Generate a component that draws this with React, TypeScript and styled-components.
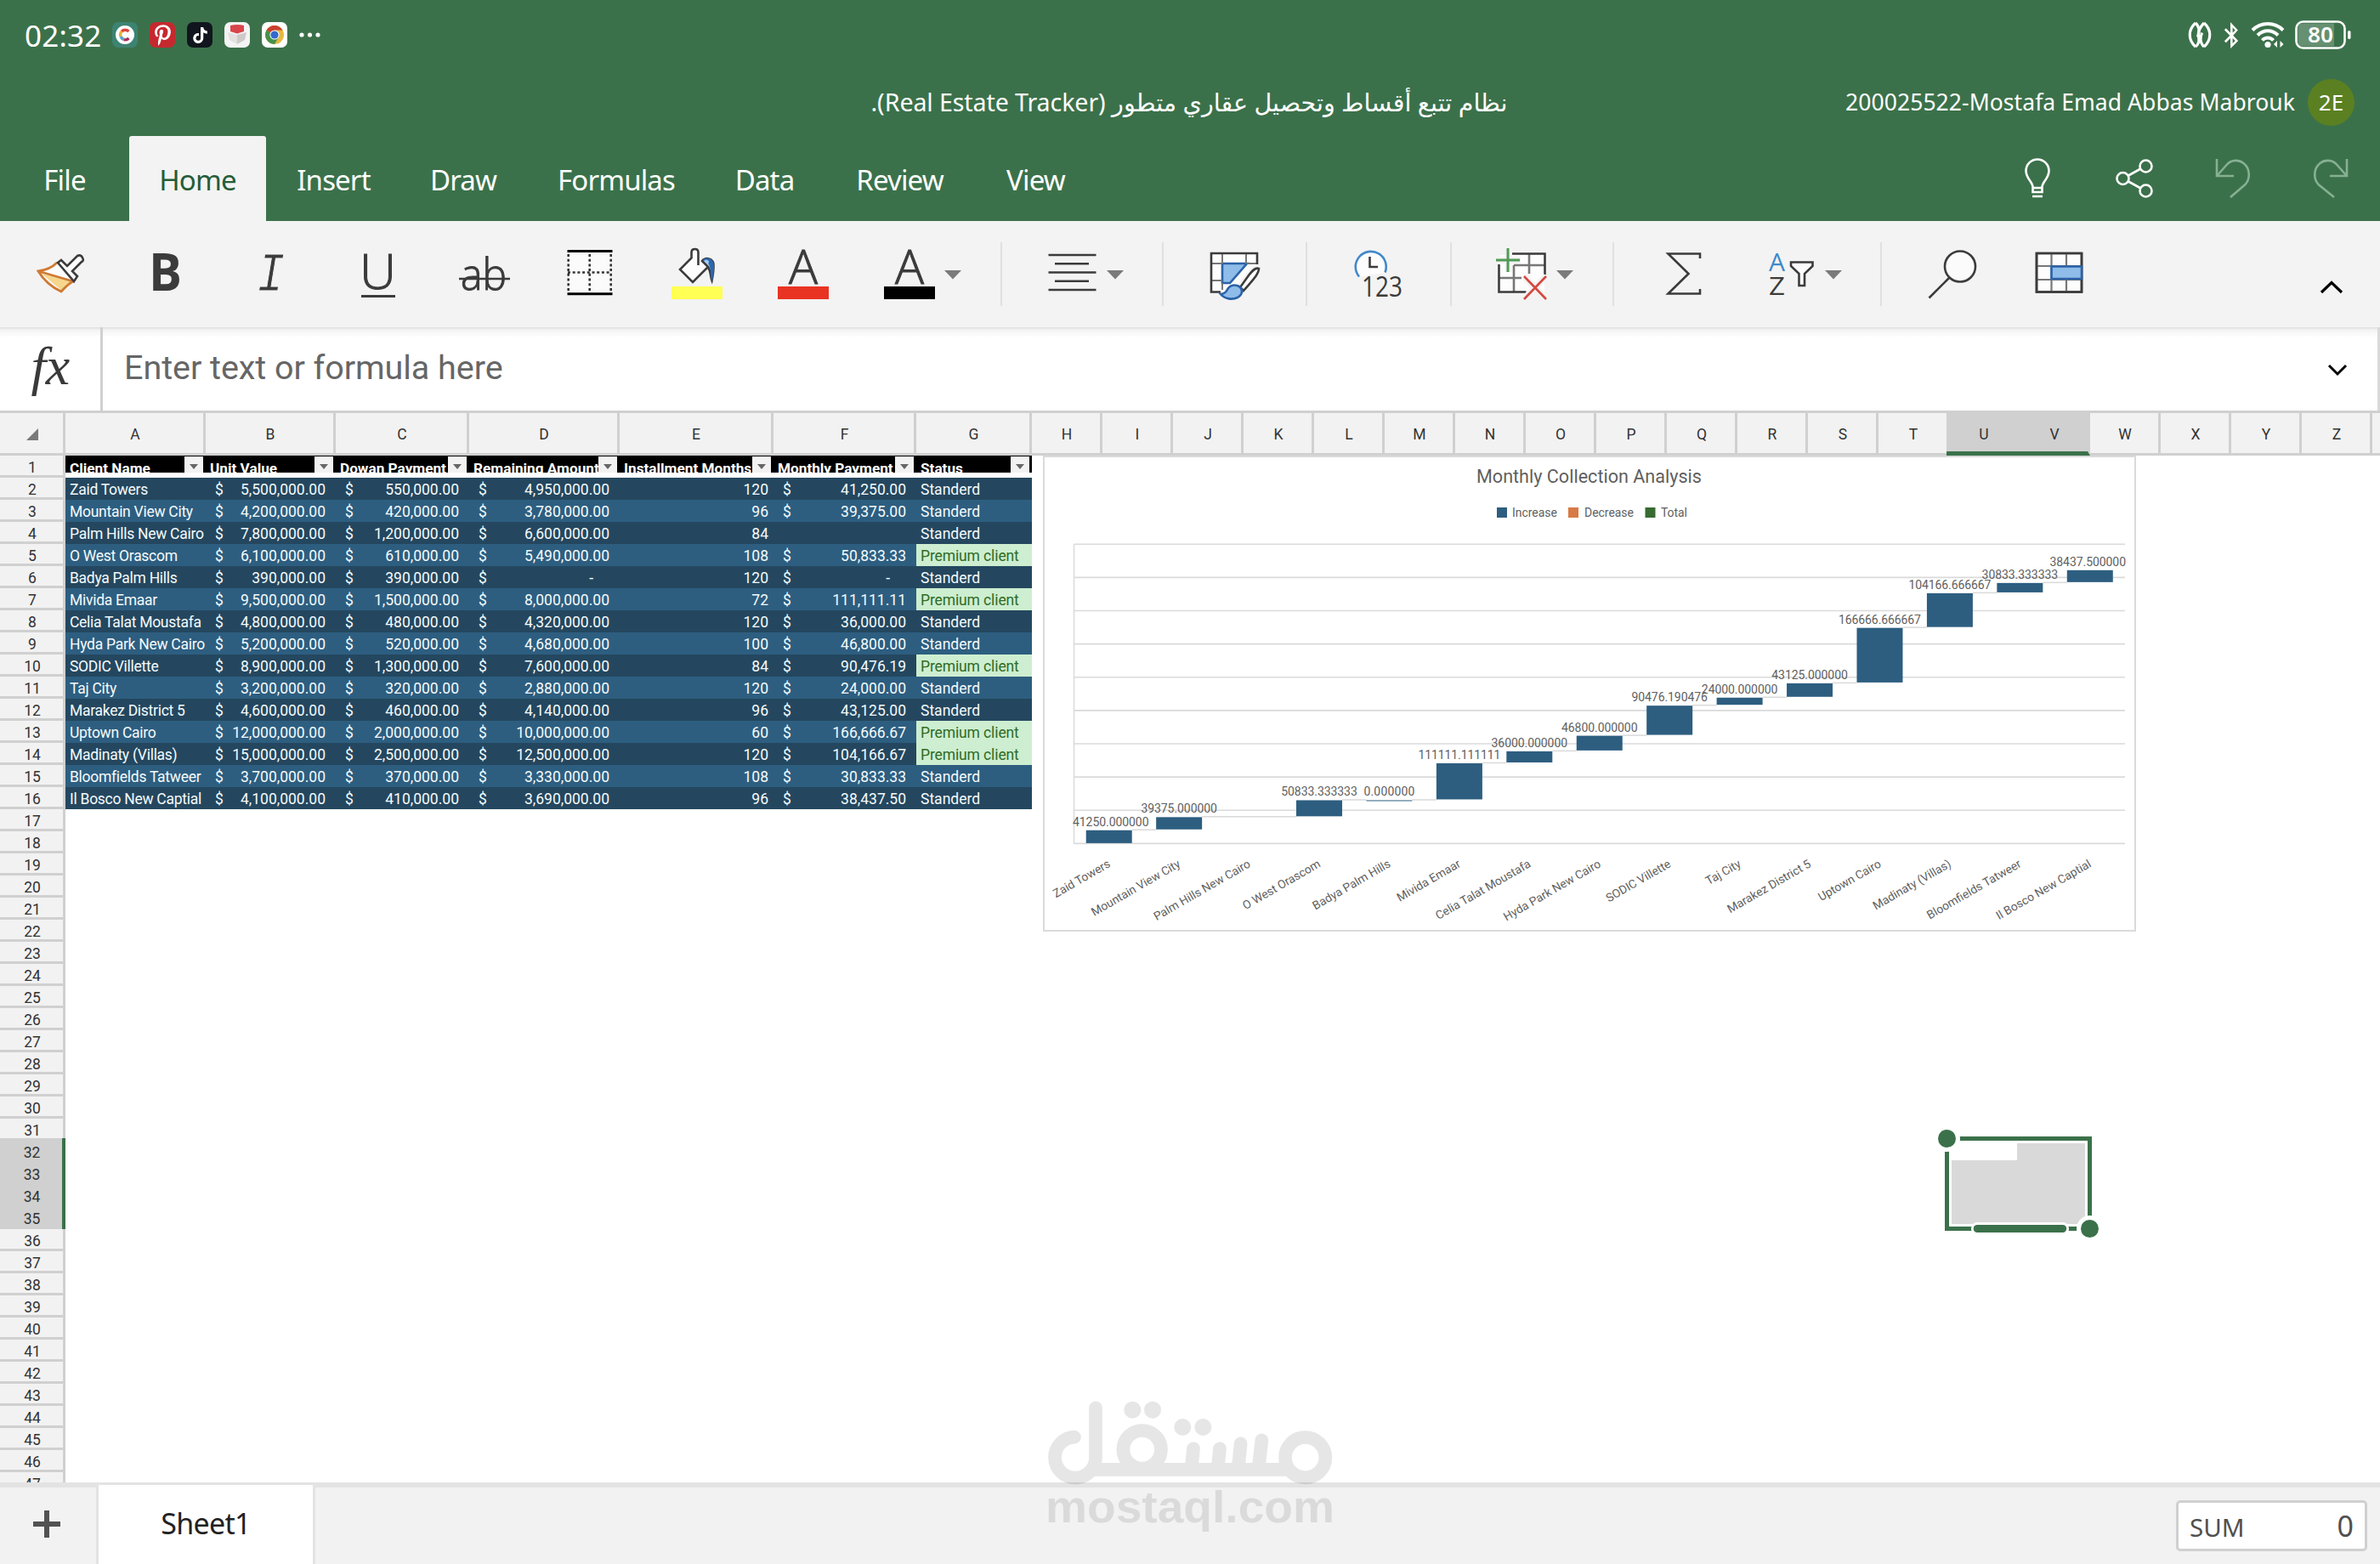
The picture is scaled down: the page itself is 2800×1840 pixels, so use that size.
import * as React from "react";
import styled, { createGlobalStyle, css } from "styled-components";
import { FaBluetoothB, FaPinterestP, FaTiktok } from "react-icons/fa";

const GREEN = "#3b714a";
const LINE = "#d0d0d0";
const UI_FONT = `"Noto Sans", "DejaVu Sans", sans-serif`;
const CELL_FONT = `Roboto, "Liberation Sans", sans-serif`;

const GlobalStyle = createGlobalStyle`
  body {
    margin: 0;
    background: #fff;
  }
  svg {
    display: block;
    flex: none;
  }
`;

const Screen = styled.div`
  position: relative;
  display: flex;
  flex-direction: column;
  width: 2800px;
  height: 1840px;
  overflow: hidden;
  font-family: ${UI_FONT};
`;

/* ---------- header ---------- */

const Header = styled.header`
  display: flex;
  flex-direction: column;
  height: 260px;
  background: ${GREEN};
  color: #fff;
`;

const StatusBar = styled.div`
  display: flex;
  align-items: center;
  justify-content: space-between;
  height: 82px;
  padding: 0 34px 0 29px;
`;

const StatusGroup = styled.div<{ gap: number }>`
  display: flex;
  align-items: center;
  gap: ${(props) => props.gap}px;
`;

const Clock = styled.span`
  width: 90px;
  font-size: 35px;
  letter-spacing: 0.2px;
  white-space: nowrap;
`;

const AppBadge = styled.span<{ color: string }>`
  display: flex;
  align-items: center;
  justify-content: center;
  width: 30px;
  height: 30px;
  border-radius: 7px;
  font-size: 22px;
  color: #fff;
  background: ${(props) => props.color};
`;

const TitleBar = styled.div`
  display: grid;
  grid-template-columns: 1fr 780px 1fr;
  align-items: center;
  height: 76px;
  padding: 0 30px 0 28px;
`;

const FileTitle = styled.div`
  grid-column: 2;
  padding-bottom: 2px;
  font-size: 28.6px;
  letter-spacing: -0.1px;
  text-align: center;
  white-space: nowrap;
`;

const Account = styled.div`
  display: flex;
  align-items: center;
  justify-content: flex-end;
  gap: 15px;
  font-size: 26.5px;
  letter-spacing: 0.06px;
  white-space: nowrap;
`;

const Avatar = styled.span`
  display: flex;
  align-items: center;
  justify-content: center;
  width: 55px;
  height: 55px;
  border-radius: 50%;
  background: #5a8022;
  font-size: 26px;
`;

const TabBar = styled.nav`
  display: flex;
  align-items: flex-end;
  height: 102px;
`;

const Tab = styled.div<{ width: number; $active?: boolean }>`
  display: flex;
  align-items: center;
  justify-content: center;
  box-sizing: border-box;
  width: ${(props) => props.width}px;
  height: 100px;
  padding-top: 2px;
  font-size: 33px;
  letter-spacing: -0.85px;
  ${(props) =>
    props.$active &&
    css`
      background: #f3f3f3;
      color: #265c37;
      border-radius: 3px 3px 0 0;
    `}
`;

const HeaderActions = styled.div`
  margin-left: auto;
  height: 100px;
`;

/* ---------- toolbar ---------- */

const Toolbar = styled.div`
  display: flex;
  height: 125px;
  padding-left: 8px;
  background: #f3f3f3;
`;

const ToolDivider = styled.i`
  width: 2px;
  height: 75px;
  margin-top: 25px;
  background: #e0e0e0;
`;

const ToolEnd = styled.div`
  margin-left: auto;
`;

/* ---------- formula bar ---------- */

const FormulaBar = styled.div`
  display: flex;
  align-items: center;
  box-sizing: border-box;
  height: 98px;
  background: linear-gradient(#dedede, #f3f3f3 3px, #fff 12px);
  border-right: 3px solid #d9d9d9;
`;

const FxBox = styled.div`
  display: flex;
  align-items: center;
  justify-content: center;
  box-sizing: border-box;
  width: 121px;
  height: 98px;
  padding-bottom: 6px;
  border-right: 3px solid ${LINE};
  font: italic 64px "Liberation Serif", serif;
  letter-spacing: -0.5px;
  color: #3a3a3a;
`;

const FormulaInput = styled.div`
  flex: 1;
  padding: 0 0 4px 25px;
  font: 39.5px ${CELL_FONT};
  letter-spacing: -0.05px;
  color: #666;
`;

/* ---------- sheet ---------- */

const ColumnHeader = styled.div`
  display: flex;
  box-sizing: border-box;
  height: 53px;
  border-top: 3px solid ${LINE};
  overflow: hidden;
  font: 17.5px ${CELL_FONT};
  color: #333;
`;

const ColumnLabel = styled.div<{ width: number; $selected?: boolean }>`
  flex: none;
  display: flex;
  align-items: center;
  justify-content: center;
  box-sizing: border-box;
  width: ${(props) => props.width}px;
  height: 50px;
  padding: 3px 0 0 2px;
  background: #f2f2f2;
  border-right: 3px solid ${LINE};
  border-bottom: 3px solid ${LINE};
  ${(props) =>
    props.$selected &&
    css`
      width: ${props.width + 3}px;
      margin-left: -3px;
      background: ${LINE};
      border-bottom: 5px solid ${GREEN};
      padding: 5px 0 0 5px;
    `}
`;

const Body = styled.div`
  display: flex;
  height: 1208px;
  overflow: hidden;
`;

const RowHeader = styled.div`
  flex: none;
  width: 77px;
  font: 17.5px ${CELL_FONT};
  color: #333;
`;

const RowLabel = styled.div<{ $selected?: boolean }>`
  box-sizing: border-box;
  height: 26px;
  padding: 3px 0 0 2px;
  text-align: center;
  line-height: 23px;
  background: #f2f2f2;
  border-right: 3px solid ${LINE};
  border-bottom: 3px solid ${LINE};
  ${(props) =>
    props.$selected &&
    css`
      height: 29px;
      margin-top: -3px;
      padding-top: 6px;
      background: ${LINE};
      border-right: 4px solid ${GREEN};
      border-bottom: 0;
    `}
`;

const Canvas = styled.div`
  position: relative;
  flex: 1;
  background: #fff;
`;

const gridColumns = css`
  display: grid;
  grid-template-columns: 165px 153px 157px 177px 181px 168px 136px;
  width: 1137px;
`;

const TableHead = styled.div`
  ${gridColumns}
  height: 20px;
  margin-bottom: 6px;
  background: #000;
  overflow: hidden;
`;

const HeadCell = styled.div`
  display: flex;
  box-sizing: border-box;
  height: 20px;
  padding: 1px 3px 0 5px;
  overflow: hidden;
`;

const HeadText = styled.span`
  flex: 1;
  min-width: 0;
  white-space: nowrap;
  font: bold 17.2px/28px ${CELL_FONT};
  color: #fff;
`;

const FilterButton = styled.span`
  flex: none;
  z-index: 1;
  width: 22px;
  height: 19px;
  background: #f2f2f2;
`;

const TableRow = styled.div<{ $dark: boolean }>`
  ${gridColumns}
  height: 26px;
  background: ${(props) => (props.$dark ? "#24475f" : "#2d5e80")};
  color: #f4fafc;
  font: 17.5px/29px ${CELL_FONT};
`;

const Cell = styled.div<{ $align?: "end" | "between"; $premium?: boolean; $tight?: boolean }>`
  display: flex;
  height: 26px;
  padding: 0 6px 0 5px;
  white-space: nowrap;
  letter-spacing: ${(props) => (props.$tight ? "-0.28px" : "0")};
  ${(props) => props.$align === "end" && "justify-content: flex-end;"}
  ${(props) =>
    props.$align === "between" &&
    css`
      justify-content: space-between;
      padding: 0 12px 0 11px;
    `}
  ${(props) =>
    props.$premium &&
    css`
      background: #cdeed0;
      color: #2f6b26;
      letter-spacing: -0.12px;
    `}
`;

const Dash = styled.span`
  margin-right: 19px;
`;

const ChartFrame = styled.div`
  position: absolute;
  left: 1150px;
  top: 0;
`;

const Selection = styled.div`
  position: absolute;
  left: 2193px;
  top: 784px;
`;

/* ---------- bottom bar ---------- */

const SheetBar = styled.footer`
  display: flex;
  box-sizing: border-box;
  height: 96px;
  background: #f2f2f2;
`;

const AddSheet = styled.div`
  box-sizing: border-box;
  width: 116px;
  border-top: 6px solid #e3e3e3;
  border-right: 3px solid #e3e3e3;
  padding: 27px 0 0 39px;
`;

const SheetTab = styled.div`
  display: flex;
  align-items: center;
  justify-content: center;
  box-sizing: border-box;
  width: 252px;
  padding-bottom: 4px;
  background: #fff;
  border-top: 3px solid #e3e3e3;
  font-size: 34px;
  letter-spacing: -0.7px;
  color: #222;
`;

const BarRest = styled.div`
  display: flex;
  justify-content: flex-end;
  flex: 1;
  padding: 15px 15px 0 0;
  border-top: 6px solid #e3e3e3;
  border-left: 3px solid #e3e3e3;
`;

const SumBox = styled.div`
  display: flex;
  align-items: baseline;
  justify-content: space-between;
  box-sizing: border-box;
  width: 225px;
  height: 60px;
  padding: 2px 13px 0 13px;
  border: 3px solid ${LINE};
  border-radius: 5px;
  background: #fff;
  font-size: 29.5px;
  line-height: 50px;
  color: #505050;
`;

const SumValue = styled.span`
  font-size: 34px;
`;

const Watermark = styled.div`
  position: absolute;
  left: 1200px;
  top: 1620px;
`;

/* ---------- data ---------- */

const columns: [string, number][] = [
  ["A", 165],
  ["B", 153],
  ["C", 157],
  ["D", 177],
  ["E", 181],
  ["F", 168],
  ["G", 136],
  ..."HIJKLMNOPQRSTUVWXYZ".split("").map((c) => [c, 83] as [string, number]),
];

const heads = [
  "Client Name",
  "Unit Value",
  "Dowan Payment",
  "Remaining Amount",
  "Installment Months",
  "Monthly Payment",
  "Status",
];

// client, unit value, down payment, remaining, months, monthly, premium
type Client = [string, string, string, string, number, string, boolean];

const clients: Client[] = [
  ["Zaid Towers", "5,500,000.00", "550,000.00", "4,950,000.00", 120, "41,250.00", false],
  ["Mountain View City", "4,200,000.00", "420,000.00", "3,780,000.00", 96, "39,375.00", false],
  ["Palm Hills New Cairo", "7,800,000.00", "1,200,000.00", "6,600,000.00", 84, "", false],
  ["O West Orascom", "6,100,000.00", "610,000.00", "5,490,000.00", 108, "50,833.33", true],
  ["Badya Palm Hills", "390,000.00", "390,000.00", "-", 120, "-", false],
  ["Mivida Emaar", "9,500,000.00", "1,500,000.00", "8,000,000.00", 72, "111,111.11", true],
  ["Celia Talat Moustafa", "4,800,000.00", "480,000.00", "4,320,000.00", 120, "36,000.00", false],
  ["Hyda Park New Cairo", "5,200,000.00", "520,000.00", "4,680,000.00", 100, "46,800.00", false],
  ["SODIC Villette", "8,900,000.00", "1,300,000.00", "7,600,000.00", 84, "90,476.19", true],
  ["Taj City", "3,200,000.00", "320,000.00", "2,880,000.00", 120, "24,000.00", false],
  ["Marakez District 5", "4,600,000.00", "460,000.00", "4,140,000.00", 96, "43,125.00", false],
  ["Uptown Cairo", "12,000,000.00", "2,000,000.00", "10,000,000.00", 60, "166,666.67", true],
  ["Madinaty (Villas)", "15,000,000.00", "2,500,000.00", "12,500,000.00", 120, "104,166.67", true],
  ["Bloomfields Tatweer", "3,700,000.00", "370,000.00", "3,330,000.00", 108, "30,833.33", false],
  ["Il Bosco New Captial", "4,100,000.00", "410,000.00", "3,690,000.00", 96, "38,437.50", false],
];

const monthly: (number | null)[] = [
  41250, 39375, null, 50833.333333, 0, 111111.111111, 36000, 46800,
  90476.190476, 24000, 43125, 166666.666667, 104166.666667, 30833.333333,
  38437.5,
];

/* ---------- pieces ---------- */

type ToolProps = { x: number; w: number; children: React.ReactNode };

// every toolbar drawing shares one coordinate space that starts at y = 260
function Tool({ x, w, children }: ToolProps) {
  return (
    <svg
      width={w}
      height={124}
      viewBox={`${x} 260 ${w} 124`}
      fill="none"
      stroke="#3b3b3b"
      strokeWidth={2.6}
    >
      {children}
    </svg>
  );
}

type GlyphProps = {
  x: number;
  y: number;
  size: number;
  w: number;
  font?: string;
  weight?: number;
  italic?: boolean;
  fill?: string;
  outline?: string;
  children: string;
};

function Glyph(props: GlyphProps) {
  return (
    <text
      x={props.x}
      y={props.y}
      fontSize={props.size}
      fontFamily={props.font || "Open Sans, Noto Sans, sans-serif"}
      fontWeight={props.weight || 300}
      fontStyle={props.italic ? "italic" : "normal"}
      textLength={props.w}
      lengthAdjust="spacingAndGlyphs"
      stroke={props.outline || "none"}
      strokeWidth={props.outline ? 1 : 0}
      fill={props.fill || "#3b3b3b"}
    >
      {props.children}
    </text>
  );
}

const Caret = ({ x }: { x: number }) => (
  <path d={`M${x} 318h20l-10 10.500z`} fill="#7a7a7a" stroke="none" />
);

function StatusIcons() {
  return (
    <StatusGroup gap={12}>
      <svg width="28" height="32" viewBox="0 0 28 32" fill="none" stroke="#fff" strokeWidth="3.200">
        <path d="M9 2C0 10 0 22 9 30M9 2C15 8 13 14 11.500 18.500" />
        <path d="M9 30C16.500 24 10.500 17 13 11 14.500 7 17 4 19 2" />
        <path d="M19 2C28 10 28 22 19 30M19 30C13 24 15 18 16.500 13.500" />
      </svg>
      <FaBluetoothB size={31} style={{ width: 22 }} />
      <svg width="40" height="32" viewBox="0 0 40 32" fill="none" stroke="#fff" strokeWidth="4">
        <path d="M2 10.500C12 .5 28 .5 38 10.500" />
        <path d="M8 16.500C15 9.500 25 9.500 32 16.500" />
        <path d="M13.500 22.500C17 18.500 23 18.500 26.500 22.500" />
        <circle cx="20" cy="27.500" r="3.600" fill="#fff" stroke="none" />
        <path d="M31 23v8l-4-4zM34.500 23v8l4-4z" fill="#fff" stroke="none" />
      </svg>
      <svg width="66" height="34" viewBox="0 0 66 34">
        <rect x="1.500" y="1.500" width="57" height="31" rx="8" fill="none" stroke="#fff" strokeWidth="2.600" />
        <path d="M9 3.500h37v27H9a5.500 5.500 0 0 1-5.500-5.500V9A5.500 5.500 0 0 1 9 3.500z" fill="#fff" opacity=".22" />
        <rect x="62" y="12" width="3.500" height="10" rx="1.700" fill="#fff" />
        <text x="15" y="26" fontSize="25" fontWeight="600" fontFamily="Noto Sans" textLength="30" lengthAdjust="spacingAndGlyphs" fill="#fff">
          80
        </text>
      </svg>
    </StatusGroup>
  );
}

function AppBadges() {
  return (
    <StatusGroup gap={14}>
      <AppBadge color="#3d8372">
        <svg width="24" height="24" viewBox="0 0 24 24" fill="none" strokeWidth="3.400">
          <circle cx="12" cy="12" r="11" fill="#fff" />
          <path d="M16.500 8A6 6 0 0 0 8 8" stroke="#e0463c" />
          <path d="M8 8A6 6 0 0 0 7 14" stroke="#e9b13a" />
          <path d="M7 14A6 6 0 0 0 11 17.500" stroke="#54a6c9" />
          <path d="M11 17.700A6 6 0 0 0 16.500 16" stroke="#b32a58" />
        </svg>
      </AppBadge>
      <AppBadge color="#c5292f">
        <FaPinterestP size={25} />
      </AppBadge>
      <AppBadge color="#11151d">
        <FaTiktok size={19} />
      </AppBadge>
      <AppBadge color="#f4f4f4">
        <svg width="24" height="24" viewBox="0 0 24 24">
          <path d="M1 9l11 3v11L3 18z" fill="#e4e0e0" />
          <path d="M23 9l-11 3v11l9-5z" fill="#cfcaca" />
          <path d="M4 1q8-2 16 0v7l-8 2.500L4 8z" fill="#d9454b" />
        </svg>
      </AppBadge>
      <AppBadge color="#fff">
        <svg width="24" height="24" viewBox="0 0 24 24">
          <circle cx="12" cy="12" r="11" fill="#e6b93f" />
          <path d="M12 12L2.500 6.500A11 11 0 0 1 21.500 6.500H12z" fill="#c9402f" />
          <path d="M2.500 6.500A11 11 0 0 0 12 23l4.700-8.300L12 12z" fill="#45924c" />
          <circle cx="12" cy="12" r="5.600" fill="#fff" />
          <circle cx="12" cy="12" r="4.600" fill="#3568cf" />
        </svg>
      </AppBadge>
      <svg width="26" height="6" viewBox="0 0 26 6" fill="#fff">
        <circle cx="3" cy="3" r="2.600" />
        <circle cx="12.500" cy="3" r="2.600" />
        <circle cx="22" cy="3" r="2.600" />
      </svg>
    </StatusGroup>
  );
}

function QuickActions() {
  return (
    <svg width="460" height="100" viewBox="2340 160 460 100" fill="none" stroke="#fff" strokeWidth="2.600">
      <path d="M2391.500 221v-1c0-6-8-10-8-19a13.500 13.500 0 0 1 27 0c0 9-8 13-8 19v6h-11zM2391.500 221h11M2391 231h12" />
      <circle cx="2524.500" cy="195.500" r="7" />
      <circle cx="2497.500" cy="210" r="7" />
      <circle cx="2524.500" cy="224.500" r="7" />
      <path d="M2504 206.500l14.500-8M2504 213.500l14.500 8" />
      <g stroke="#86b094">
        <path d="M2608 187v20h20M2608.500 206.500l11-12.500c6-7 15-6 20-2 8 6.500 8 18 2 25l-17.500 15" />
        <path d="M2761 187v20h-20M2760.500 206.500l-11-12.500c-6-7-15-6-20-2-8 6.500-8 18-2 25l18.500 15" />
      </g>
    </svg>
  );
}

function Tools() {
  return (
    <Toolbar>
      <Tool x={8} w={125}>
        <path d="M44 319c10-1 17-5 23-11l20 22c-5 5-8 9-10 13l-8-2z" fill="#fdfdfd" stroke="none" />
        <path d="M49 322l38 9c-6 4-9 8-13 12z" fill="#f6d68d" stroke="none" />
        <path d="M67 309c-6 6-14 9-22 10 6 10 14 18 27 24 4-4 8-9 14-12M45 319l41 12" stroke="#cf7a34" strokeWidth="2.800" />
        <path d="M68 309l4-3 7 7 12-12q4-2 6 2t-1 5l-11 11 6 6-4 6z" fill="#fdfdfd" />
      </Tool>
      <Tool x={133} w={125}>
        <Glyph x={175} y={342} size={60} w={39} weight={700}>
          B
        </Glyph>
      </Tool>
      <Tool x={258} w={125}>
        <Glyph x={302} y={342} size={65} w={33} italic font="Liberation Mono" outline="#f3f3f3">
          I
        </Glyph>
      </Tool>
      <Tool x={383} w={125}>
        <Glyph x={423} y={340} size={57} w={43} outline="#3b3b3b">
          U
        </Glyph>
        <path d="M425 348.500h40" strokeWidth={3} />
      </Tool>
      <Tool x={508} w={125}>
        <Glyph x={542} y={341} size={51} w={54} outline="#3b3b3b">
          ab
        </Glyph>
        <path d="M540 328h60" />
      </Tool>
      <Tool x={633} w={125}>
        <path d="M669 296h49v50h-49z" fill="#fbfbfb" stroke="none" />
        <path
          d="M668.700 299v43M693.700 299v43M718.700 299v43M668 320.500h51"
          stroke="#333"
          strokeDasharray="3 2.700"
        />
        <path d="M667.500 295.500h53M667.500 345.800h53" stroke="#000" strokeWidth={3} />
      </Tool>
      <Tool x={758} w={125}>
        <path d="M813.500 303.500L800 317l15 15 18-18-11-11z" fill="#fdfdfd" stroke="none" />
        <path d="M826 307c3-5 14-4 13.500 6 0 7-1 12-2 17-2-5-1-12-5-16z" fill="#a5cdf1" />
        <path
          d="M825.500 307c4-6 15-4 14.500 6 0 6-1 13-2.300 18-2.700-7-.7-14-3.700-20-2-2-5-3-8.500-4z"
          fill="#2b68b0"
          stroke="none"
        />
        <path d="M827.500 307.500c2-2.500 5-2.500 6.500 0l-1 5z" fill="#a5cdf1" stroke="none" />
        <path d="M825.500 306.500l7.500 7.500-18 18-15-15 13.500-13.500V297q0-4 4-4t4 4v15" fill="#fdfdfd" />
        <path d="M790 337h60v15h-60z" fill="#ffff54" stroke="none" />
      </Tool>
      <Tool x={883} w={125}>
        <Glyph x={928} y={334} size={55} w={34} outline="#3b3b3b">
          A
        </Glyph>
        <path d="M915 337h60v15h-60z" fill="#e93323" stroke="none" />
      </Tool>
      <Tool x={1008} w={169}>
        <Glyph x={1053} y={334} size={55} w={34} outline="#3b3b3b">
          A
        </Glyph>
        <path d="M1040 337h60v15h-60z" fill="#000" stroke="none" />
        <Caret x={1111} />
      </Tool>
      <ToolDivider />
      <Tool x={1179} w={188}>
        <path d="M1233.500 300h56M1241 310.300h40M1233.500 320.500h56M1241 330.700h40M1233.500 341h56" />
        <Caret x={1302} />
      </Tool>
      <ToolDivider />
      <Tool x={1369} w={167}>
        <path d="M1425 298h54v12l-30 34h-24z" fill="#fdfdfd" stroke="none" />
        <path d="M1438 310h29l-20 23h-9z" fill="#8fbce9" stroke="#2b62a8" />
        <path d="M1438 299v11M1466 299v11M1426 310h12M1467 310h12M1426 330h12M1438 333v8" stroke="#777" strokeWidth={2} />
        <path d="M1479 311v-13h-54v45.500h11" />
        <path d="M1481 316c-4-2-8 3-12 8l-12 15 6 6c6-7 11-14 15-21q3-5 3-8z" fill="#fdfdfd" stroke="#f3f3f3" strokeWidth={7} />
        <path d="M1481 316c-4-2-8 3-12 8l-10 14 4 4c6-7 11-12 15-18q3-5 3-8z" fill="#fdfdfd" />
        <path d="M1436 346c6 0 7-4 9-7 4-5 11-4 14-1 4 4 2 9-3 12-6 3-15 2-20-4z" fill="#8fbce9" stroke="#2b62a8" />
      </Tool>
      <ToolDivider />
      <Tool x={1538} w={168}>
        <path d="M1599 325.500a18 18 0 1 1 30.500-5" fill="#fdfdfd" stroke="#4189ca" />
        <path d="M1611.500 302v12h9.500" />
        <Glyph x={1602} y={349} size={33} w={48} weight={400}>
          123
        </Glyph>
      </Tool>
      <ToolDivider />
      <Tool x={1708} w={189}>
        <path d="M1764 300h53v43h-53z" fill="#fdfdfd" stroke="none" />
        <path d="M1799 299v13M1781 312h36M1781 312v31M1764 327h26M1799 312v10" stroke="#777" />
        <path d="M1779 298.500h38.500V323M1763.500 311v32.500h32" />
        <path d="M1760 306h29M1774.500 291v29" stroke="#f3f3f3" strokeWidth={8} />
        <path d="M1760 306h28M1774 292v28" stroke="#4f9a55" strokeWidth={3} />
        <path d="M1793 325l26 27M1819 325l-26 27" stroke="#f3f3f3" strokeWidth={8} />
        <path d="M1793 325l26 27M1819 325l-26 27" stroke="#d5483f" />
        <Caret x={1831} />
      </Tool>
      <ToolDivider />
      <Tool x={1899} w={161}>
        <path d="M2000 304v-5.500h-37.500l24 23.500-24 23.500h37.500V340" />
      </Tool>
      <Tool x={2060} w={152}>
        <Glyph x={2081} y={319} size={30} w={19} weight={400} fill="#4189ca">
          A
        </Glyph>
        <Glyph x={2081} y={347} size={30} w={19} weight={400}>
          Z
        </Glyph>
        <path d="M2107 308.500h25.500v4.500l-9.500 9v14h-6.500v-14l-9.500-9z" fill="#fdfdfd" />
        <Caret x={2147} />
      </Tool>
      <ToolDivider />
      <Tool x={2214} w={146}>
        <circle cx="2306" cy="313.500" r="18" fill="#fbfbfb" />
        <path d="M2293.500 326.500l-24 24" />
      </Tool>
      <Tool x={2360} w={126}>
        <path d="M2396 298h53v45.500h-53z" fill="#fdfdfd" />
        <path d="M2413.500 299v44M2431 299v44M2397 313h52M2397 329h52" stroke="#777" strokeWidth={2.2} />
        <path d="M2396 298h53v45.500h-53z" />
        <path d="M2413.500 313.500H2449V328h-35.500z" fill="#8fbce9" stroke="#2b62a8" />
      </Tool>
      <ToolEnd>
        <Tool x={2680} w={120}>
          <path d="M2731 344l12-11.500 12 11.500" stroke="#000" strokeWidth={3.2} />
        </Tool>
      </ToolEnd>
    </Toolbar>
  );
}

const PLOT = { left: 1263.5, right: 2500, top: 640.2, bottom: 992.4 };
const STEP = (PLOT.right - PLOT.left) / clients.length;
const UNIT = (PLOT.bottom - PLOT.top) / 900000;

function Waterfall() {
  let total = 0;
  let lastRight = 0;
  const bars = monthly.map((value, i) => {
    if (value === null) return null;
    const cx = PLOT.left + STEP * (i + 0.5);
    const base = PLOT.bottom - total * UNIT;
    total += value;
    const top = PLOT.bottom - total * UNIT;
    const from = lastRight;
    lastRight = cx + 27;
    const label = value.toFixed(6);
    const w = label.length * 7.5 - (value === 0 ? 0 : 0.5);
    const labelX = Math.min(Math.max(cx, 1262 + w / 2), 2501 - w / 2);
    return (
      <g key={i}>
        {from > 0 && <path d={`M${from} ${base}H${cx - 27}`} stroke="#d9d9d9" strokeWidth="1.500" />}
        <rect x={cx - 27} y={top + 0.5} width="54" height={Math.max(base - top - 1, 1)} fill="#2d5e80" />
        <text x={labelX} y={top - 4.5} textAnchor="middle" textLength={w}>
          {label}
        </text>
      </g>
    );
  });

  return (
    <svg
      width="1286"
      height="560"
      viewBox="1227 536 1286 560"
      fontFamily="Roboto, sans-serif"
      fontSize="14"
      fill="#5f5f5f"
    >
      <rect x="1228" y="537" width="1284" height="558" fill="#fff" stroke="#dadada" strokeWidth="2" />
      <text x="1737" y="568" fontSize="22" textLength="265" lengthAdjust="spacingAndGlyphs">
        Monthly Collection Analysis
      </text>
      <rect x="1761" y="597" width="12" height="12" fill="#2d5e80" />
      <text x="1779" y="608" textLength="53">
        Increase
      </text>
      <rect x="1845" y="597" width="12" height="12" fill="#d87a45" />
      <text x="1864" y="608" textLength="58">
        Decrease
      </text>
      <rect x="1935.500" y="597" width="12" height="12" fill="#376b31" />
      <text x="1954" y="608" textLength="31">
        Total
      </text>
      {Array.from({ length: 10 }, (_, i) => (
        <path
          key={i}
          d={`M${PLOT.left} ${PLOT.bottom - i * 100000 * UNIT}H${PLOT.right}`}
          stroke="#dadada"
          strokeWidth="1.600"
        />
      ))}
      <path d={`M${PLOT.left} ${PLOT.top}V${PLOT.bottom}`} stroke="#dadada" strokeWidth="1.500" />
      {bars}
      {clients.map(([name], i) => (
        <text
          key={name}
          transform={`translate(${PLOT.left + STEP * (i + 0.5) + 2.5} 1019) rotate(-30)`}
          textAnchor="end"
          fontSize="13.800"
        >
          {name}
        </text>
      ))}
    </svg>
  );
}

function SelectionBox() {
  return (
    <svg width="220" height="150" viewBox="2270 1320 220 150">
      <path d="M2373 1345h80v95h-157v-75h77z" fill="#d9d9d9" />
      <rect x="2290.500" y="1339.500" width="168" height="106" fill="none" stroke={GREEN} strokeWidth="5" />
      <circle cx="2290.500" cy="1339.500" r="15.500" fill="#fff" />
      <circle cx="2290.500" cy="1339.500" r="10.500" fill={GREEN} />
      <circle cx="2458.500" cy="1445.500" r="15.500" fill="#fff" />
      <circle cx="2458.500" cy="1445.500" r="10.500" fill={GREEN} />
      <rect x="2319" y="1438" width="115" height="15" rx="7" fill="#fff" />
      <rect x="2321.700" y="1441" width="109.500" height="9" rx="4.500" fill={GREEN} />
    </svg>
  );
}

function Money({ value }: { value: string }) {
  if (!value) return <Cell />;
  return (
    <Cell $align="between">
      <span>$</span>
      {value === "-" ? <Dash>-</Dash> : <span>{value}</span>}
    </Cell>
  );
}

export default function App() {
  return (
    <Screen>
      <GlobalStyle />
      <Header>
        <StatusBar>
          <StatusGroup gap={13}>
            <Clock>02:32</Clock>
            <AppBadges />
          </StatusGroup>
          <StatusIcons />
        </StatusBar>
        <TitleBar>
          <FileTitle dir="rtl">نظام تتبع أقساط وتحصيل عقاري متطور (Real Estate Tracker).</FileTitle>
          <Account>
            <span>200025522-Mostafa Emad Abbas Mabrouk</span>
            <Avatar>2E</Avatar>
          </Account>
        </TitleBar>
        <TabBar>
          <Tab width={152}>File</Tab>
          <Tab width={161} $active>
            Home
          </Tab>
          <Tab width={159}>Insert</Tab>
          <Tab width={146}>Draw</Tab>
          <Tab width={214}>Formulas</Tab>
          <Tab width={135}>Data</Tab>
          <Tab width={183}>Review</Tab>
          <Tab width={137}>View</Tab>
          <HeaderActions>
            <QuickActions />
          </HeaderActions>
        </TabBar>
      </Header>
      <Tools />
      <FormulaBar>
        <FxBox>fx</FxBox>
        <FormulaInput>Enter text or formula here</FormulaInput>
        <svg width="67" height="24" viewBox="2730 424 67 24" fill="none" stroke="#000" strokeWidth="3">
          <path d="M2740 432l10 10 10-10" />
        </svg>
      </FormulaBar>
      <ColumnHeader>
        <ColumnLabel width={77}>
          <svg width="14" height="14">
            <path d="M14 0v14H0z" fill="#7a7a7a" />
          </svg>
        </ColumnLabel>
        {columns.map(([name, width]) => (
          <ColumnLabel key={name} width={width} $selected={name === "U" || name === "V"}>
            {name}
          </ColumnLabel>
        ))}
        <ColumnLabel width={83} />
      </ColumnHeader>
      <Body>
        <RowHeader>
          {Array.from({ length: 47 }, (_, i) => (
            <RowLabel key={i} $selected={i >= 31 && i <= 34}>
              {i + 1}
            </RowLabel>
          ))}
        </RowHeader>
        <Canvas>
          <TableHead>
            {heads.map((head) => (
              <HeadCell key={head}>
                <HeadText>{head}</HeadText>
                <FilterButton>
                  <svg width="22" height="19" viewBox="0 0 22 19">
                    <path d="M6 9h10l-5 6z" fill="#666" />
                  </svg>
                </FilterButton>
              </HeadCell>
            ))}
          </TableHead>
          {clients.map(([name, unit, down, left, months, pay, premium], i) => (
            <TableRow key={name} $dark={i % 2 === 0}>
              <Cell $tight>{name}</Cell>
              <Money value={unit} />
              <Money value={down} />
              <Money value={left} />
              <Cell $align="end">{months}</Cell>
              <Money value={pay} />
              <Cell $premium={premium}>{premium ? "Premium client" : "Standerd"}</Cell>
            </TableRow>
          ))}
          <ChartFrame>
            <Waterfall />
          </ChartFrame>
          <Selection>
            <SelectionBox />
          </Selection>
        </Canvas>
      </Body>
      <SheetBar>
        <AddSheet>
          <svg width="32" height="32" viewBox="0 0 32 32" stroke="#525252" strokeWidth="6">
            <path d="M16 0v32M0 16h32" />
          </svg>
        </AddSheet>
        <SheetTab>Sheet1</SheetTab>
        <BarRest>
          <SumBox>
            SUM <SumValue>0</SumValue>
          </SumBox>
        </BarRest>
      </SheetBar>
      <Watermark>
        <svg width="400" height="200" viewBox="0 0 1200 600" opacity=".095">
          <g fill="none" stroke="#000" strokeWidth="47" strokeLinecap="round">
            <path d="M192 212A72 72 0 1 0 267 284V109" />
            <path d="M260 326.500H960" strokeLinecap="butt" />
            <circle cx="431" cy="256" r="67" />
            <circle cx="1007" cy="284" r="71" />
            <path d="M612 253l-6 60M705 253l-6 60M779 235l-8 78M853 223l-10 90" />
          </g>
          <circle cx="397" cy="116" r="30" />
          <circle cx="468" cy="116" r="30" />
          <circle cx="574" cy="177" r="30" />
          <circle cx="646" cy="177" r="30" />
          <text x="90" y="513" fontSize="158" fontWeight="bold" fontFamily="Liberation Sans" textLength="1020" lengthAdjust="spacingAndGlyphs">
            mostaql.com
          </text>
        </svg>
      </Watermark>
    </Screen>
  );
}
